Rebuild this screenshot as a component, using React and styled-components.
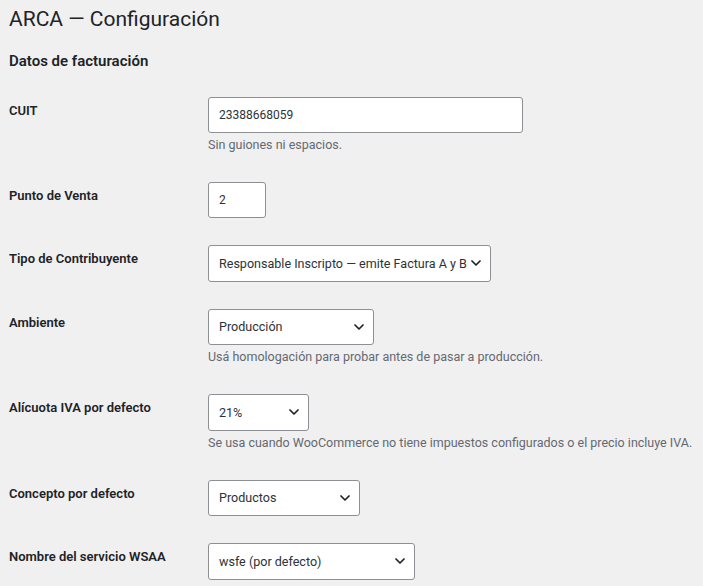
import React from 'react';
import styled, { createGlobalStyle } from 'styled-components';

const GlobalStyle = createGlobalStyle`
  html, body {
    margin: 0;
    padding: 0;
    background: #f0f0f1;
  }
  body {
    font-family: Roboto, "Liberation Sans", Arial, sans-serif;
    color: #1d2327;
  }
`;

const Wrap = styled.div`
  padding: 0 10px 0 9px;
`;

const Title = styled.h1`
  margin: 6px 0 0;
  font-size: 21px;
  line-height: 27px;
  font-weight: 400;
  color: #1d2327;
`;

const SectionTitle = styled.h2`
  margin: 18px 0 0;
  font-size: 15px;
  line-height: 20px;
  font-weight: 600;
  color: #1d2327;
`;

const FormTable = styled.div`
  margin-top: 11px;
  display: flex;
  flex-direction: column;
`;

const Row = styled.div`
  display: grid;
  grid-template-columns: 199px 1fr;
  align-items: start;
`;

const Label = styled.label`
  padding-top: 20px;
  font-size: 13px;
  line-height: 18px;
  font-weight: 600;
  color: #1d2327;
`;

const Field = styled.div`
  padding: 15px 0 12px;
`;

const TextInput = styled.input`
  display: block;
  box-sizing: border-box;
  width: ${(p) => p.$w}px;
  height: 36px;
  margin: 0;
  padding: 0 8px 0 10px;
  border: 1px solid #8c8f94;
  border-radius: 3px;
  background: #fff;
  font-family: Roboto, "Liberation Sans", Arial, sans-serif;
  font-size: 12px;
  color: #2c3338;
  outline: none;
`;

const SelectWrap = styled.span`
  position: relative;
  display: block;
  width: ${(p) => p.$w}px;
  height: 36.5px;
`;

const Select = styled.select`
  appearance: none;
  -webkit-appearance: none;
  display: block;
  box-sizing: border-box;
  width: 100%;
  height: 100%;
  margin: 0;
  padding: 0 20px 0 10px;
  border: 1px solid #8c8f94;
  border-radius: 3px;
  background: #fff;
  font-family: Roboto, "Liberation Sans", Arial, sans-serif;
  font-size: 12.55px;
  color: #2c3338;
  outline: none;
`;

const Chevron = styled.svg`
  position: absolute;
  right: 10px;
  top: 50%;
  width: 10px;
  height: 6px;
  margin-top: -3px;
  pointer-events: none;
`;

const Hint = styled.p`
  margin: 2px 0 0;
  font-size: 12.5px;
  line-height: 20px;
  color: #646970;
  white-space: nowrap;
`;

function Arrow() {
  return (
    <Chevron viewBox="0 0 10 6" aria-hidden="true">
      <path d="M1 1 L5 5 L9 1" fill="none" stroke="#1d2327" strokeWidth="1.7" strokeLinecap="round" strokeLinejoin="round" />
    </Chevron>
  );
}

function SelectField({ width, value, options }) {
  return (
    <SelectWrap $w={width}>
      <Select defaultValue={value}>
        {options.map((o) => (
          <option key={o} value={o}>{o}</option>
        ))}
      </Select>
      <Arrow />
    </SelectWrap>
  );
}

export default function App() {
  return (
    <>
      <GlobalStyle />
      <Wrap>
        <Title>ARCA — Configuración</Title>
        <SectionTitle>Datos de facturación</SectionTitle>
        <FormTable>
          <Row>
            <Label htmlFor="cuit">CUIT</Label>
            <Field>
              <TextInput id="cuit" $w={315} defaultValue="23388668059" />
              <Hint>Sin guiones ni espacios.</Hint>
            </Field>
          </Row>
          <Row>
            <Label htmlFor="pv">Punto de Venta</Label>
            <Field>
              <TextInput id="pv" $w={58} defaultValue="2" />
            </Field>
          </Row>
          <Row>
            <Label>Tipo de Contribuyente</Label>
            <Field>
              <SelectField
                width={283}
                value="Responsable Inscripto — emite Factura A y B"
                options={['Responsable Inscripto — emite Factura A y B', 'Monotributista — emite Factura C']}
              />
            </Field>
          </Row>
          <Row>
            <Label>Ambiente</Label>
            <Field>
              <SelectField width={166} value="Producción" options={['Homologación', 'Producción']} />
              <Hint>Usá homologación para probar antes de pasar a producción.</Hint>
            </Field>
          </Row>
          <Row>
            <Label>Alícuota IVA por defecto</Label>
            <Field>
              <SelectField width={101} value="21%" options={['0%', '10.5%', '21%', '27%']} />
              <Hint>Se usa cuando WooCommerce no tiene impuestos configurados o el precio incluye IVA.</Hint>
            </Field>
          </Row>
          <Row>
            <Label>Concepto por defecto</Label>
            <Field>
              <SelectField width={152} value="Productos" options={['Productos', 'Servicios', 'Productos y Servicios']} />
            </Field>
          </Row>
          <Row>
            <Label>Nombre del servicio WSAA</Label>
            <Field>
              <SelectField width={207} value="wsfe (por defecto)" options={['wsfe (por defecto)', 'wsfex']} />
            </Field>
          </Row>
        </FormTable>
      </Wrap>
    </>
  );
}
